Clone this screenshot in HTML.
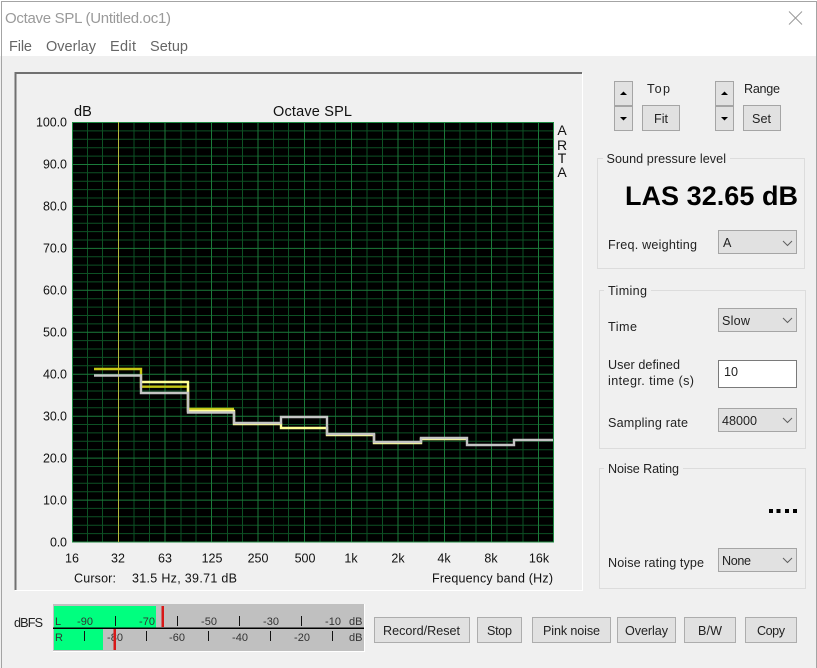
<!DOCTYPE html>
<html>
<head>
<meta charset="utf-8">
<title>Octave SPL</title>
<style>
html,body{margin:0;padding:0;background:#f0f0f0;width:817px;height:668px;overflow:hidden}
svg{display:block;position:absolute;left:0;top:0}
text{font-family:"Liberation Sans",sans-serif;fill:#1c1c1c}
.u{font-size:12.6px;fill:#222}
.c{font-size:12.5px;fill:#111}
.b{fill:#e1e1e1;stroke:#adadad;stroke-width:1}
.s{fill:#e1e1e1;stroke:#a5a5a5;stroke-width:1}
.g{fill:none;stroke:#dcdcdc;stroke-width:1}
.m{font-size:11px;fill:#333}
.chev{fill:none;stroke:#606060;stroke-width:1}
</style>
</head>
<body>
<svg width="817" height="668" viewBox="0 0 817 668" xmlns="http://www.w3.org/2000/svg">
<rect width="817" height="668" fill="#f0f0f0"/>
<rect x="0" y="0" width="817" height="56" fill="#fff"/>
<path d="M1.5 668V1.5H816.5V668" fill="none" stroke="#a4a4a4" stroke-width="1"/>
<text x="5" y="23" font-size="15" style="fill:#9a9a9a" textLength="166" lengthAdjust="spacing">Octave SPL (Untitled.oc1)</text>
<path d="M789 11.5L802 24.5M802 11.5L789 24.5" stroke="#9a9a9a" stroke-width="1" fill="none"/>
<text x="9" y="51" font-size="14.5" style="fill:#666" textLength="23" lengthAdjust="spacing">File</text>
<text x="46" y="51" font-size="14.5" style="fill:#666" textLength="50" lengthAdjust="spacing">Overlay</text>
<text x="110" y="51" font-size="14.5" style="fill:#666" textLength="26" lengthAdjust="spacing">Edit</text>
<text x="150" y="51" font-size="14.5" style="fill:#666" textLength="38" lengthAdjust="spacing">Setup</text>

<!-- graph frame -->
<path d="M15 590.5H582.5V73" fill="none" stroke="#fff" stroke-width="1"/>
<path d="M15.5 590V73H582" fill="none" stroke="#707070" stroke-width="2"/>

<!-- plot -->
<rect x="72.5" y="122.5" width="481" height="419.5" fill="#000"/>
<path fill="none" stroke="#0d5024" stroke-width="1" d="M73 130.9H553M73 139.3H553M73 147.7H553M73 156.1H553M73 172.8H553M73 181.2H553M73 189.6H553M73 198H553M73 214.8H553M73 223.2H553M73 231.6H553M73 240H553M73 256.7H553M73 265.1H553M73 273.5H553M73 281.9H553M73 298.7H553M73 307.1H553M73 315.5H553M73 323.9H553M73 340.6H553M73 349H553M73 357.4H553M73 365.8H553M73 382.6H553M73 391H553M73 399.4H553M73 407.8H553M73 424.5H553M73 432.9H553M73 441.3H553M73 449.7H553M73 466.5H553M73 474.9H553M73 483.3H553M73 491.7H553M73 508.4H553M73 516.8H553M73 525.2H553M73 533.6H553"/>
<path fill="none" stroke="#0d5024" stroke-width="1" d="M87.5 122V542M102.5 122V542M134 122V542M149.5 122V542M181 122V542M196 122V542M227.5 122V542M242.5 122V542M273.5 122V542M288.5 122V542M320 122V542M335.5 122V542M367 122V542M382.5 122V542M413.5 122V542M429 122V542M460 122V542M476 122V542M507 122V542M523 122V542"/>
<path fill="none" stroke="#1b7a3a" stroke-width="1" d="M73 164.5H553M73 206.4H553M73 248.4H553M73 290.3H553M73 332.3H553M73 374.2H553M73 416.2H553M73 458.1H553M73 500.1H553"/>
<path fill="none" stroke="#1b7a3a" stroke-width="1" d="M165 122V542M211.5 122V542M258 122V542M304.5 122V542M351.5 122V542M398 122V542M444.5 122V542M491.5 122V542M538.5 122V542"/>
<rect x="72.5" y="122.5" width="481" height="419.5" fill="none" stroke="#1f8a42" stroke-width="1"/>
<path d="M118.5 122V542" stroke="#b8b83c" stroke-width="1" fill="none"/>

<!-- traces -->
<path fill="none" stroke="#c6c614" stroke-width="2.4" d="M94 369H141V386.7H188V409H234"/>
<path fill="none" stroke="#ffff96" stroke-width="2.4" d="M141 382H188V411H234V424H281V428H327V435H374V443H421V439H467"/>
<path fill="none" stroke="#c4c4c4" stroke-width="2.4" d="M94 375.5H141V393H188V412.5H234V423H281V417H327V434H374V442H421V438H467V445H514V440H553"/>

<!-- chart labels -->
<text class="c" x="36" y="126.5" textLength="31" lengthAdjust="spacing">100.0</text>
<text class="c" x="43" y="168.5" textLength="24" lengthAdjust="spacing">90.0</text>
<text class="c" x="43" y="210.5" textLength="24" lengthAdjust="spacing">80.0</text>
<text class="c" x="43" y="252.5" textLength="24" lengthAdjust="spacing">70.0</text>
<text class="c" x="43" y="294.5" textLength="24" lengthAdjust="spacing">60.0</text>
<text class="c" x="43" y="336.5" textLength="24" lengthAdjust="spacing">50.0</text>
<text class="c" x="43" y="378.5" textLength="24" lengthAdjust="spacing">40.0</text>
<text class="c" x="43" y="420.5" textLength="24" lengthAdjust="spacing">30.0</text>
<text class="c" x="43" y="462.5" textLength="24" lengthAdjust="spacing">20.0</text>
<text class="c" x="43" y="504.5" textLength="24" lengthAdjust="spacing">10.0</text>
<text class="c" x="50" y="546.5" textLength="17" lengthAdjust="spacing">0.0</text>
<text x="74" y="116" font-size="14.5" style="fill:#111">dB</text>
<text x="273" y="116" font-size="14.5" style="fill:#111" textLength="79" lengthAdjust="spacing">Octave SPL</text>
<text x="562" y="135" text-anchor="middle" font-size="14" style="fill:#111">A</text>
<text x="562" y="150" text-anchor="middle" font-size="14" style="fill:#111">R</text>
<text x="562" y="163" text-anchor="middle" font-size="14" style="fill:#111">T</text>
<text x="562" y="177" text-anchor="middle" font-size="14" style="fill:#111">A</text>
<g text-anchor="middle">
<text class="c" x="72" y="562.5">16</text>
<text class="c" x="118" y="562.5">32</text>
<text class="c" x="165" y="562.5">63</text>
<text class="c" x="212" y="562.5">125</text>
<text class="c" x="258" y="562.5">250</text>
<text class="c" x="305" y="562.5">500</text>
<text class="c" x="351" y="562.5">1k</text>
<text class="c" x="398" y="562.5">2k</text>
<text class="c" x="444" y="562.5">4k</text>
<text class="c" x="491" y="562.5">8k</text>
<text class="c" x="539" y="562.5">16k</text>
</g>
<text class="c" x="74" y="582.5" textLength="42" lengthAdjust="spacing">Cursor:</text>
<text class="c" x="132" y="582.5" textLength="105" lengthAdjust="spacing">31.5 Hz, 39.71 dB</text>
<text class="c" x="432" y="582.5" textLength="121" lengthAdjust="spacing">Frequency band (Hz)</text>

<!-- spinners -->
<rect class="s" x="614.5" y="81.5" width="18" height="24"/>
<rect class="s" x="614.5" y="106.5" width="18" height="24"/>
<path d="M620 95H627L623.5 91.5Z" fill="#000"/>
<path d="M620 117H627L623.5 120.5Z" fill="#000"/>
<rect class="s" x="715.5" y="81.5" width="18" height="24"/>
<rect class="s" x="715.5" y="106.5" width="18" height="24"/>
<path d="M721 95H728L724.5 91.5Z" fill="#000"/>
<path d="M721 117H728L724.5 120.5Z" fill="#000"/>
<text class="u" x="647" y="93" textLength="23" lengthAdjust="spacing">Top</text>
<text class="u" x="744" y="93" textLength="36" lengthAdjust="spacing">Range</text>
<rect class="s" x="642.5" y="105.5" width="37" height="25"/>
<text class="u" x="654" y="123" textLength="14" lengthAdjust="spacing">Fit</text>
<rect class="s" x="743.5" y="105.5" width="37" height="25"/>
<text class="u" x="752" y="123" textLength="19" lengthAdjust="spacing">Set</text>

<!-- SPL group -->
<rect class="g" x="597.5" y="158.5" width="207" height="110"/>
<rect x="603" y="152" width="127" height="12" fill="#f0f0f0"/>
<text class="u" x="606.5" y="163" textLength="119.5" lengthAdjust="spacing">Sound pressure level</text>
<text x="625" y="205" font-size="27" font-weight="bold" style="fill:#000" textLength="173" lengthAdjust="spacing">LAS 32.65 dB</text>
<text class="u" x="608" y="249" textLength="89" lengthAdjust="spacing">Freq. weighting</text>
<rect class="s" x="718.5" y="230.5" width="78" height="23"/>
<text class="u" x="723" y="247">A</text>
<path class="chev" d="M783 241L787.5 245.5L792 241"/>

<!-- Timing group -->
<rect class="g" x="599.5" y="290.5" width="206" height="158"/>
<rect x="604" y="284" width="47" height="12" fill="#f0f0f0"/>
<text class="u" x="608" y="295" textLength="39" lengthAdjust="spacing">Timing</text>
<text class="u" x="608" y="331" textLength="29" lengthAdjust="spacing">Time</text>
<rect class="s" x="718.5" y="308.5" width="78" height="23"/>
<text class="u" x="722" y="325" textLength="28" lengthAdjust="spacing">Slow</text>
<path class="chev" d="M783 318L787.5 322.5L792 318"/>
<text class="u" x="608" y="369" textLength="72" lengthAdjust="spacing">User defined</text>
<text class="u" x="608" y="385" textLength="86" lengthAdjust="spacing">integr. time (s)</text>
<rect x="718.5" y="360.5" width="78" height="27" fill="#fff" stroke="#7a7a7a"/>
<text class="u" x="724" y="376" textLength="14" lengthAdjust="spacing">10</text>
<text class="u" x="608" y="427" textLength="80" lengthAdjust="spacing">Sampling rate</text>
<rect class="s" x="718.5" y="408.5" width="78" height="23"/>
<text class="u" x="722" y="425" textLength="35" lengthAdjust="spacing">48000</text>
<path class="chev" d="M783 418L787.5 422.5L792 418"/>

<!-- Noise group -->
<rect class="g" x="599.5" y="468.5" width="206" height="120"/>
<rect x="604" y="462" width="79" height="12" fill="#f0f0f0"/>
<text class="u" x="608" y="473" textLength="71" lengthAdjust="spacing">Noise Rating</text>
<rect x="769" y="509" width="4" height="4" fill="#000"/>
<rect x="776.5" y="509" width="4" height="4" fill="#000"/>
<rect x="785" y="509" width="4" height="4" fill="#000"/>
<rect x="793" y="509" width="4" height="4" fill="#000"/>
<text class="u" x="608" y="567" textLength="96" lengthAdjust="spacing">Noise rating type</text>
<rect class="s" x="718.5" y="548.5" width="78" height="23"/>
<text class="u" x="722" y="565" textLength="29" lengthAdjust="spacing">None</text>
<path class="chev" d="M783 558L787.5 562.5L792 558"/>

<!-- meter -->
<text class="u" x="14" y="627" textLength="29" lengthAdjust="spacing">dBFS</text>
<rect x="53" y="604" width="312" height="48" fill="#fff"/>
<rect x="53" y="604" width="311" height="47" fill="#c0c0c0"/>
<rect x="54" y="606" width="102" height="22" fill="#00ff7f"/>
<rect x="54" y="629" width="49" height="21" fill="#00ff7f"/>
<rect x="53" y="627.5" width="311" height="1.5" fill="#000"/>
<path d="M115.5 616V626M177.5 616V626M239.5 616V626M301.5 616V626M84.5 631V641M146.5 631V641M208.5 631V641M270.5 631V641M332.5 631V641" stroke="#111" stroke-width="1" fill="none"/>
<g text-anchor="middle">
<text class="m" x="85" y="625">-90</text>
<text class="m" x="147" y="625">-70</text>
<text class="m" x="209" y="625">-50</text>
<text class="m" x="271" y="625">-30</text>
<text class="m" x="333" y="625">-10</text>
<text class="m" x="115" y="641">-80</text>
<text class="m" x="177" y="641">-60</text>
<text class="m" x="240" y="641">-40</text>
<text class="m" x="302" y="641">-20</text>
</g>
<text class="m" x="349" y="625">dB</text>
<text class="m" x="349" y="641">dB</text>
<text class="m" x="55" y="625">L</text>
<text class="m" x="55" y="641">R</text>
<rect x="161.5" y="606" width="2.5" height="21" fill="#d81818"/>
<rect x="113.5" y="629" width="2.5" height="21" fill="#d81818"/>

<!-- buttons -->
<rect class="b" x="374.5" y="617.5" width="95" height="25"/>
<text class="u" x="383" y="635" textLength="77" lengthAdjust="spacing">Record/Reset</text>
<rect class="b" x="477.5" y="617.5" width="44" height="25"/>
<text class="u" x="487" y="635" textLength="25" lengthAdjust="spacing">Stop</text>
<rect class="b" x="532.5" y="617.5" width="78" height="25"/>
<text class="u" x="543" y="635" textLength="57" lengthAdjust="spacing">Pink noise</text>
<rect class="b" x="617.5" y="617.5" width="58" height="25"/>
<text class="u" x="625" y="635" textLength="43" lengthAdjust="spacing">Overlay</text>
<rect class="b" x="684.5" y="617.5" width="51" height="25"/>
<text class="u" x="698" y="635" textLength="24" lengthAdjust="spacing">B/W</text>
<rect class="b" x="745.5" y="617.5" width="51" height="25"/>
<text class="u" x="757" y="635" textLength="28" lengthAdjust="spacing">Copy</text>
</svg>
</body>
</html>
